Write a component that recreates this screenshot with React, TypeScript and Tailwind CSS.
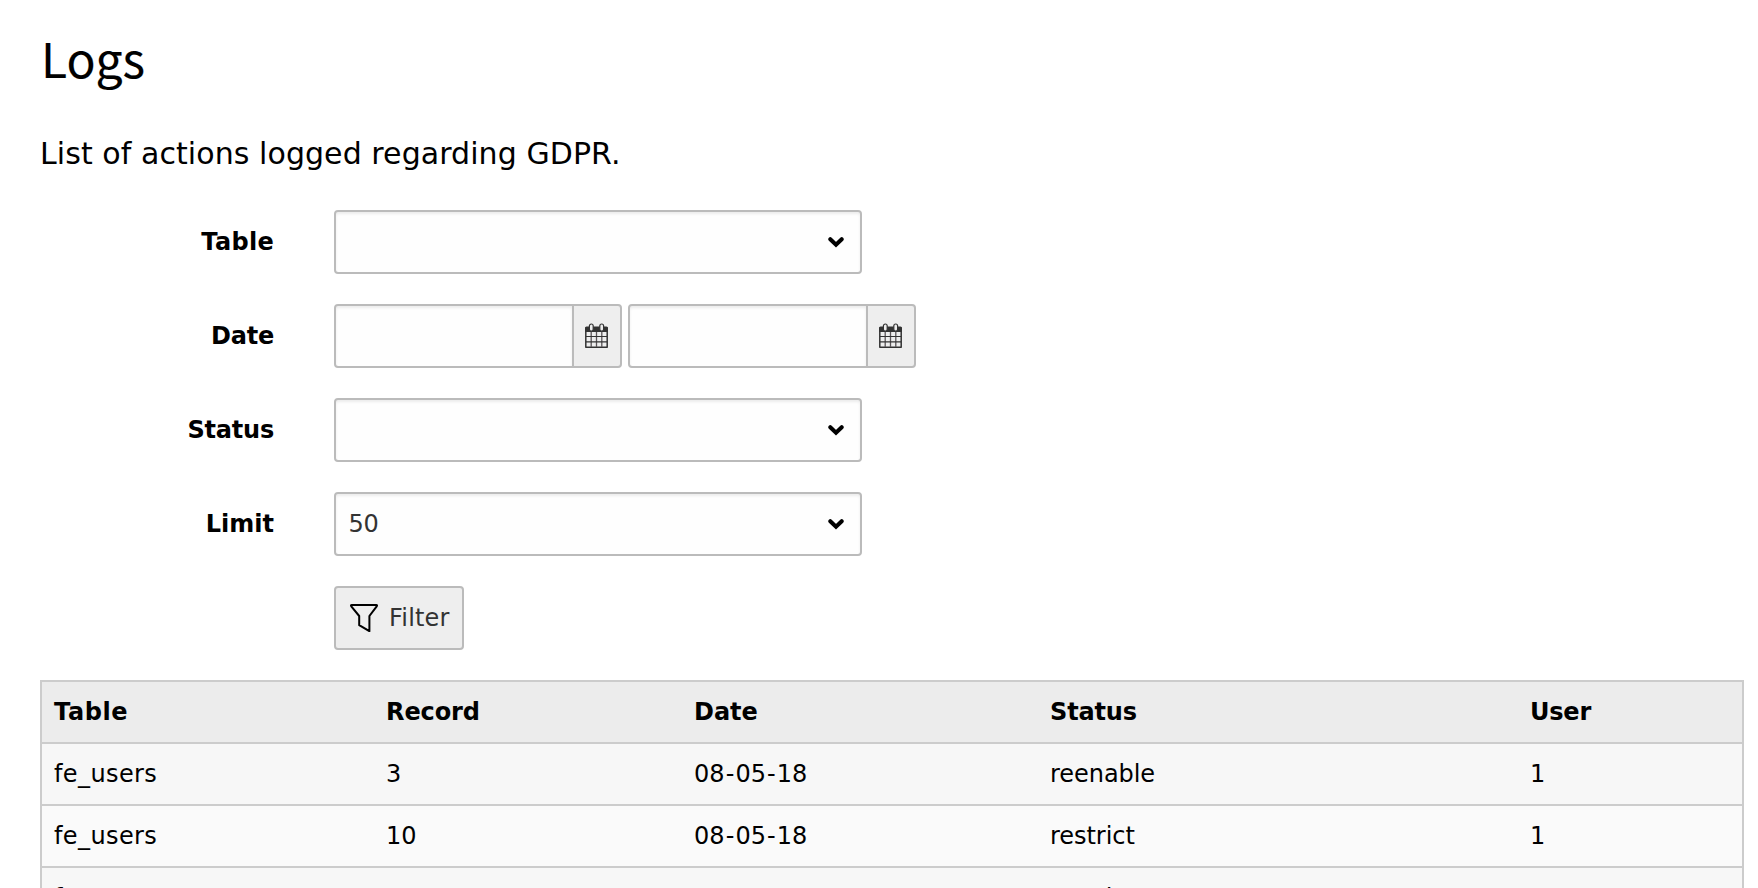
import type { ReactNode } from "react";

function Chevron() {
  return (
    <svg width="16" height="11" viewBox="0 0 16 11" fill="none" stroke="#000" strokeWidth="4" strokeLinecap="round" strokeLinejoin="miter">
      <path d="M2.300 2.200 8 7.800 13.700 2.200" />
    </svg>
  );
}

function CalendarIcon() {
  return (
    <svg className="-mt-px" width="24" height="26" viewBox="0 0 24 26" fill="none">
      <path d="M.8 5h21.400v19.200H.8z" fill="#eee" stroke="#333" strokeWidth="1.500" strokeLinejoin="round" />
      <path d="M0 5Q0 3.400 1.500 3.400h20Q23 3.400 23 5v4H0z" fill="#333" />
      <path d="M6.200 9v15M11.500 9v15M16.800 9v15" stroke="#5a5558" strokeWidth="1.300" />
      <path d="M1 13.500h21M1 18.800h21" stroke="#333" strokeWidth="1.200" />
      <rect x="4.400" y="1" width="3.800" height="7.200" rx="1.900" fill="#eee" stroke="#333" strokeWidth="1.200" />
      <rect x="14.800" y="1" width="3.800" height="7.200" rx="1.900" fill="#eee" stroke="#333" strokeWidth="1.200" />
    </svg>
  );
}

function FilterIcon() {
  return (
    <svg width="28" height="28" viewBox="0 0 28 28" fill="none" stroke="#000" strokeWidth="2" strokeLinejoin="round">
      <path d="M1.700 1h24.600q1.200 0 .4 1.300L19.400 12v15.200L9.200 21.200V12L1.300 2.300Q.5 1 1.700 1z" />
    </svg>
  );
}

function Row({ label, tracking = "", children }: { label?: string; tracking?: string; children: ReactNode }) {
  return (
    <div className="flex h-16 items-center">
      <div className={`w-[234px] text-right font-bold leading-8 text-black ${tracking}`}>{label}</div>
      <div className="ml-[60px] flex h-16">{children}</div>
    </div>
  );
}

const field = "border-2 border-[#bbb] bg-[#fefefe] shadow-[inset_0_2px_3px_rgba(0,0,0,0.075)]";

function Select({ value = "" }: { value?: string }) {
  return (
    <div className={`flex w-[528px] items-center justify-between rounded-[4px] pl-[12.500px] pr-4 text-[#333] ${field}`}>
      <span className="tracking-[-0.2px]">{value}</span>
      <Chevron />
    </div>
  );
}

function DateInput() {
  return (
    <div className="flex w-[288px]">
      <div className={`w-[240px] rounded-l-[4px] ${field}`} />
      <div className="-ml-0.5 flex w-[50px] items-center justify-center rounded-r-[4px] border-2 border-[#bbb] bg-[#eee]">
        <CalendarIcon />
      </div>
    </div>
  );
}

function DateText({ value }: { value: string }) {
  const [day, month, year] = value.split("-");
  const dash = <span className="px-[1.1px]">-</span>;
  return <>{day}{dash}{month}{dash}{year}</>;
}

const headings = [
  { text: "Table", tracking: "tracking-[0.6px]" },
  { text: "Record", tracking: "tracking-[-0.1px]" },
  { text: "Date", tracking: "tracking-normal" },
  { text: "Status", tracking: "tracking-[-0.15px]" },
  { text: "User", tracking: "tracking-[-0.2px]" },
];

const records = [
  { table: "fe_users", record: "3", date: "08-05-18", status: "reenable", user: "1" },
  { table: "fe_users", record: "10", date: "08-05-18", status: "restrict", user: "1" },
  { table: "fe_users", record: "3", date: "08-05-18", status: "restrict", user: "1" },
];

const grid = "grid h-[62px] grid-cols-[332px_308px_356px_480px_1fr] items-center border-t-2 border-[#ccc] pl-3";

export default function App() {
  return (
    <div className="h-[888px] w-[1758px] overflow-hidden bg-white pl-10 pt-[25px] font-['Verdana','DejaVu_Sans',sans-serif] text-[24px] text-black">
      <h1 className="h-16 pl-px font-['Noto_Sans_CJK_SC',sans-serif] text-[48px] leading-16 [-webkit-text-stroke:0.15px_#000]">Logs</h1>
      <p className="mt-[45px] h-10 text-[30px] leading-10 tracking-[0.07px]">List of actions logged regarding GDPR.</p>
      <form className="mt-9 flex flex-col gap-[30px]">
        <Row label="Table" tracking="tracking-[0.3px]"><Select /></Row>
        <Row label="Date" tracking="tracking-[-0.2px]">
          <div className="flex gap-1.5">
            <DateInput />
            <DateInput />
          </div>
        </Row>
        <Row label="Status" tracking="tracking-[-0.2px]"><Select /></Row>
        <Row label="Limit"><Select value="50" /></Row>
        <Row>
          <button type="button" className="flex w-[130px] items-center gap-[11px] rounded-[4px] border-2 border-[#bbb] bg-[#eee] pl-[14px] text-[#333]">
            <FilterIcon />
            <span className="tracking-[0.2px]">Filter</span>
          </button>
        </Row>
      </form>
      <div className="mt-[30px] w-[1704px] border-x-2 border-[#ccc]">
        <div className={`${grid} bg-[#ececec] font-bold`}>
          {headings.map((h) => <span key={h.text} className={h.tracking}>{h.text}</span>)}
        </div>
        {records.map((r, i) => (
          <div key={i} className={`${grid} ${i % 2 ? "bg-[#fafafa]" : "bg-[#f7f7f7]"}`}>
            <span className="tracking-[0.4px]">{r.table}</span>
            <span>{r.record}</span>
            <span><DateText value={r.date} /></span>
            <span className="tracking-[-0.05px]">{r.status}</span>
            <span>{r.user}</span>
          </div>
        ))}
      </div>
    </div>
  );
}
